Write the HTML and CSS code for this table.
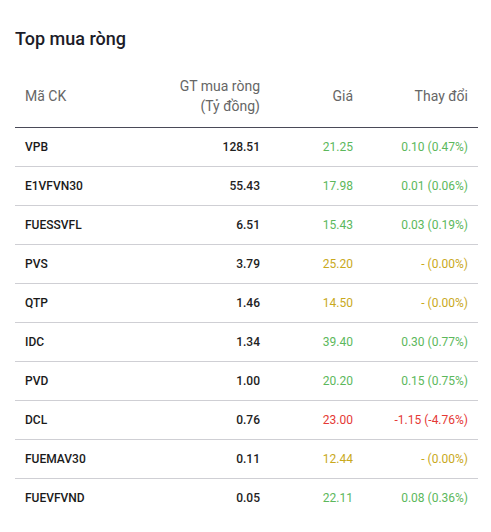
FILE: index.html
```html
<!DOCTYPE html>
<html lang="vi">
<head>
<meta charset="utf-8">
<link rel="stylesheet" href="styles.css">
</head>
<body>
<div class="panel">
  <h2 class="title">Top mua ròng</h2>
  <table class="grid">
    <colgroup>
      <col class="c1"><col class="c2"><col class="c3"><col class="c4">
    </colgroup>
    <thead>
      <tr>
        <th class="left">Mã CK</th>
        <th>GT mua ròng<br>(Tỷ đồng)</th>
        <th>Giá</th>
        <th>Thay đổi</th>
      </tr>
    </thead>
    <tbody>
      <tr><td class="sym">VPB</td><td class="val">128.51</td><td class="up">21.25</td><td class="up">0.10 (0.47%)</td></tr>
      <tr><td class="sym">E1VFVN30</td><td class="val">55.43</td><td class="up">17.98</td><td class="up">0.01 (0.06%)</td></tr>
      <tr><td class="sym">FUESSVFL</td><td class="val">6.51</td><td class="up">15.43</td><td class="up">0.03 (0.19%)</td></tr>
      <tr><td class="sym">PVS</td><td class="val">3.79</td><td class="ref">25.20</td><td class="ref">- (0.00%)</td></tr>
      <tr><td class="sym">QTP</td><td class="val">1.46</td><td class="ref">14.50</td><td class="ref">- (0.00%)</td></tr>
      <tr><td class="sym">IDC</td><td class="val">1.34</td><td class="up">39.40</td><td class="up">0.30 (0.77%)</td></tr>
      <tr><td class="sym">PVD</td><td class="val">1.00</td><td class="up">20.20</td><td class="up">0.15 (0.75%)</td></tr>
      <tr><td class="sym">DCL</td><td class="val">0.76</td><td class="down">23.00</td><td class="down">-1.15 (-4.76%)</td></tr>
      <tr><td class="sym">FUEMAV30</td><td class="val">0.11</td><td class="ref">12.44</td><td class="ref">- (0.00%)</td></tr>
      <tr><td class="sym">FUEVFVND</td><td class="val">0.05</td><td class="up">22.11</td><td class="up">0.08 (0.36%)</td></tr>
    </tbody>
  </table>
</div>
</body>
</html>
```

FILE: styles.css
```css
html, body {
  margin: 0;
  padding: 0;
  background: #ffffff;
}
body {
  font-family: Roboto, "Liberation Sans", Arial, sans-serif;
  color: #1f1f1f;
}
.panel {
  padding: 27px 13px 0 15px;
}
.title {
  margin: 0 0 14px 0;
  font-size: 18px;
  line-height: 24px;
  font-weight: 500;
  color: #1c1c28;
}
.grid {
  width: 463px;
  border-collapse: collapse;
  table-layout: fixed;
}
.c1 { width: 120px; }
.c2 { width: 135px; }
.c3 { width: 93px; }
.c4 { width: 115px; }
.grid th {
  font-size: 14px;
  line-height: 20px;
  font-weight: 400;
  color: #666666;
  text-align: right;
  padding: 11px 10px;
  border-bottom: 1px solid #4a4a58;
  vertical-align: middle;
}
.grid th.left {
  text-align: left;
}
.grid td {
  font-size: 12px;
  line-height: 18px;
  padding: 10px 10px;
  text-align: right;
  border-bottom: 1px solid #cfcfd4;
  white-space: nowrap;
}
.grid tbody tr:last-child td {
  border-bottom: none;
}
.grid td.sym {
  text-align: left;
  font-weight: 500;
  color: #1a1a1a;
}
.grid td.val {
  font-weight: 500;
  color: #222222;
}
.up { color: #5cb85c; }
.ref { color: #c9a91c; }
.down { color: #e53935; }
```
